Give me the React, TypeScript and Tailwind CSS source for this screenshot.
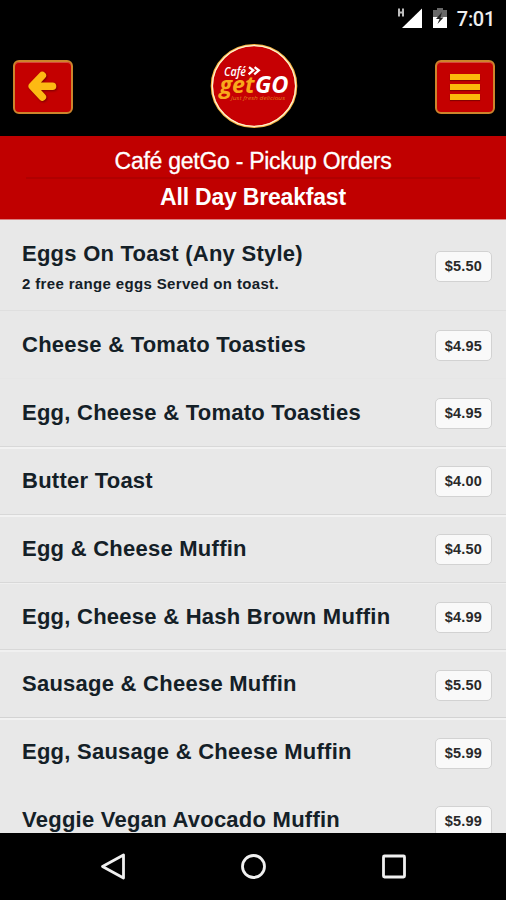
interface MenuItem {
  name: string;
  price: string;
  description?: string;
  divider: string;
}

const items: MenuItem[] = [
  {
    name: "Eggs On Toast (Any Style)",
    price: "$5.50",
    description: "2 free range eggs Served on toast.",
    divider: "border-[#dfdfdf]",
  },
  { name: "Cheese & Tomato Toasties", price: "$4.95", divider: "border-[#e6e6e6]" },
  { name: "Egg, Cheese & Tomato Toasties", price: "$4.95", divider: "border-[#d8d8d8] shadow-[0_2px_0_#f2f2f2]" },
  { name: "Butter Toast", price: "$4.00", divider: "border-[#d8d8d8] shadow-[0_2px_0_#f2f2f2]" },
  { name: "Egg & Cheese Muffin", price: "$4.50", divider: "border-[#d8d8d8] shadow-[0_1px_0_#efefef]" },
  { name: "Egg, Cheese & Hash Brown Muffin", price: "$4.99", divider: "border-[#d8d8d8] shadow-[0_2px_0_#f0f0f0]" },
  { name: "Sausage & Cheese Muffin", price: "$5.50", divider: "border-[#d3d3d3] shadow-[0_2px_0_#f2f2f2]" },
  { name: "Egg, Sausage & Cheese Muffin", price: "$5.99", divider: "border-[#e8e8e8]" },
  { name: "Veggie Vegan Avocado Muffin", price: "$5.99", divider: "border-[#e8e8e8]" },
];

const StatusBar = () => (
  <div className="flex h-9 shrink-0 items-center justify-end pr-[11px]">
    <svg width="26" height="24" viewBox="0 0 26 24" className="mr-[10px]">
      <path d="M3 2.5v8M7 2.5v8M3 6.5h4" stroke="#bdbdbd" strokeWidth="2" fill="none" />
      <path d="M26 2.5v19.5H6z" fill="#fff" />
    </svg>
    <svg width="16" height="22" viewBox="0 0 16 22" className="mr-[9px]">
      <path d="M5 1h6v2h4v7H1V3h4z" fill="#686868" />
      <path d="M1 10h14v11H1z" fill="#fff" />
      <path d="M10 5L4 12h3.5L5.5 17l6-6.5H8.5z" fill="#222" />
    </svg>
    <span className="pt-[2px] font-[Roboto] text-[20px] font-medium leading-none tracking-[-0.3px] text-[#eee]">
      7:01
    </span>
  </div>
);

const Logo = () => (
  <svg width="88" height="86" viewBox="0 0 88 86" role="img" aria-label="Café getGO">
    <ellipse cx="44" cy="43" rx="42.2" ry="41" fill="#c60003" stroke="#f6b443" strokeWidth="2.2" />
    <ellipse cx="44" cy="43" rx="41.6" ry="40.4" fill="none" stroke="#fff1cf" strokeWidth="1.3" />
    <g fontFamily="Open Sans, sans-serif" fontStyle="italic">
      <text x="14" y="32.5" fontSize="12.5" fontWeight="600" fill="#fff" textLength="22" lengthAdjust="spacingAndGlyphs">
        Café
      </text>
      <text x="9.5" y="50" fontSize="24" fontWeight="700" fill="#f9a91c" textLength="35" lengthAdjust="spacingAndGlyphs">
        get
      </text>
      <text x="45" y="50" fontSize="23" fontWeight="700" fill="#fff" textLength="33.5" lengthAdjust="spacingAndGlyphs">
        GO
      </text>
      <text x="21" y="56.5" fontSize="6" fill="#e27b19" textLength="54" lengthAdjust="spacingAndGlyphs">
        Just fresh delicious
      </text>
    </g>
    <path d="M39 24.2l4.2 3.2-4.6 4M44.6 24.2l4.2 3.2-4.6 4" fill="none" stroke="#fff" strokeWidth="2.3" />
  </svg>
);

const buttonStyle =
  "mt-[2px] flex h-[54px] w-[60px] items-center justify-center rounded-[6px] border-2 border-[#cc852c] bg-[#c40000] shadow-[inset_0_1px_0_#d8483c]";

const Header = () => (
  <header className="flex h-[100px] shrink-0 items-center justify-between pl-[13px] pr-[11px]">
    <button aria-label="Back" className={buttonStyle}>
      <svg width="32" height="32" viewBox="0 0 32 32" className="drop-shadow-[1px_1px_1px_#7b0000]">
        <path
          d="M15.3 4.5L5.3 15.2 15.3 26M6.5 15.2H25.5"
          fill="none"
          stroke="#fdb913"
          strokeWidth="7.6"
          strokeLinecap="round"
          strokeLinejoin="round"
        />
      </svg>
    </button>
    <div className="pr-px">
      <Logo />
    </div>
    <button aria-label="Menu" className={buttonStyle}>
      <span className="flex flex-col gap-[4px]">
        <span className="h-[6px] w-[30px] bg-[#fcb90b] shadow-[0_1px_1px_#800]" />
        <span className="h-[6px] w-[30px] bg-[#fcb90b] shadow-[0_1px_1px_#800]" />
        <span className="h-[6px] w-[30px] bg-[#fcb90b] shadow-[0_1px_1px_#800]" />
      </span>
    </button>
  </header>
);

const MenuRow = ({ name, price, description, divider }: MenuItem) => (
  <li
    className={`flex shrink-0 items-center justify-between border-b pl-[22px] pr-[14px] ${divider} ${
      description ? "h-[91px]" : "h-[67.9px]"
    }`}
  >
    <div className={`whitespace-nowrap text-[#142027] ${description ? "pt-[5px]" : "pt-px"}`}>
      <h2 className="text-[22px] font-bold leading-[28px] tracking-[0.25px]">{name}</h2>
      {description && (
        <p className="mt-[5px] text-[15px] font-bold leading-[22px] tracking-[0.35px]">{description}</p>
      )}
    </div>
    <span className="mt-[3px] flex h-[31px] w-[57px] items-center justify-center rounded-[5px] border border-[#d2d2d2] bg-[#f9f9f9] pt-px text-[14.5px] font-bold tracking-[0.2px] text-[#292929]">
      {price}
    </span>
  </li>
);

const NavBar = () => (
  <nav className="flex h-[67px] shrink-0 items-center justify-center bg-black">
    <svg width="506" height="67" viewBox="0 0 506 67" fill="none" stroke="#f0f0f0" strokeWidth="2.8">
      <path d="M102.5 33.5L123.5 22v23z" strokeLinejoin="round" />
      <circle cx="253.5" cy="33.5" r="11" />
      <rect x="383.5" y="23" width="21" height="21" rx="1" />
    </svg>
  </nav>
);

const App = () => {
  return (
    <div className="flex h-[900px] w-[506px] flex-col overflow-hidden bg-black font-['Liberation_Sans',sans-serif]">
      <StatusBar />
      <Header />
      <div className="flex h-[84px] shrink-0 flex-col border-b border-[#d98080] bg-[#c00000] px-[26px] text-center text-white">
        <h1 className="h-[43px] border-b-2 border-[#b00000] pt-[11px] text-[23px] leading-[28px] tracking-[-0.27px] [-webkit-text-stroke:0.3px_#fff]">
          Café getGo - Pickup Orders
        </h1>
        <p className="pt-[4px] text-[23px] font-bold leading-[28px] tracking-[-0.2px]">All Day Breakfast</p>
      </div>
      <ul className="flex min-h-0 flex-1 flex-col overflow-hidden bg-[#e8e8e8]">
        {items.map((item) => (
          <MenuRow key={item.name} {...item} />
        ))}
      </ul>
      <NavBar />
    </div>
  );
};

export default App;
